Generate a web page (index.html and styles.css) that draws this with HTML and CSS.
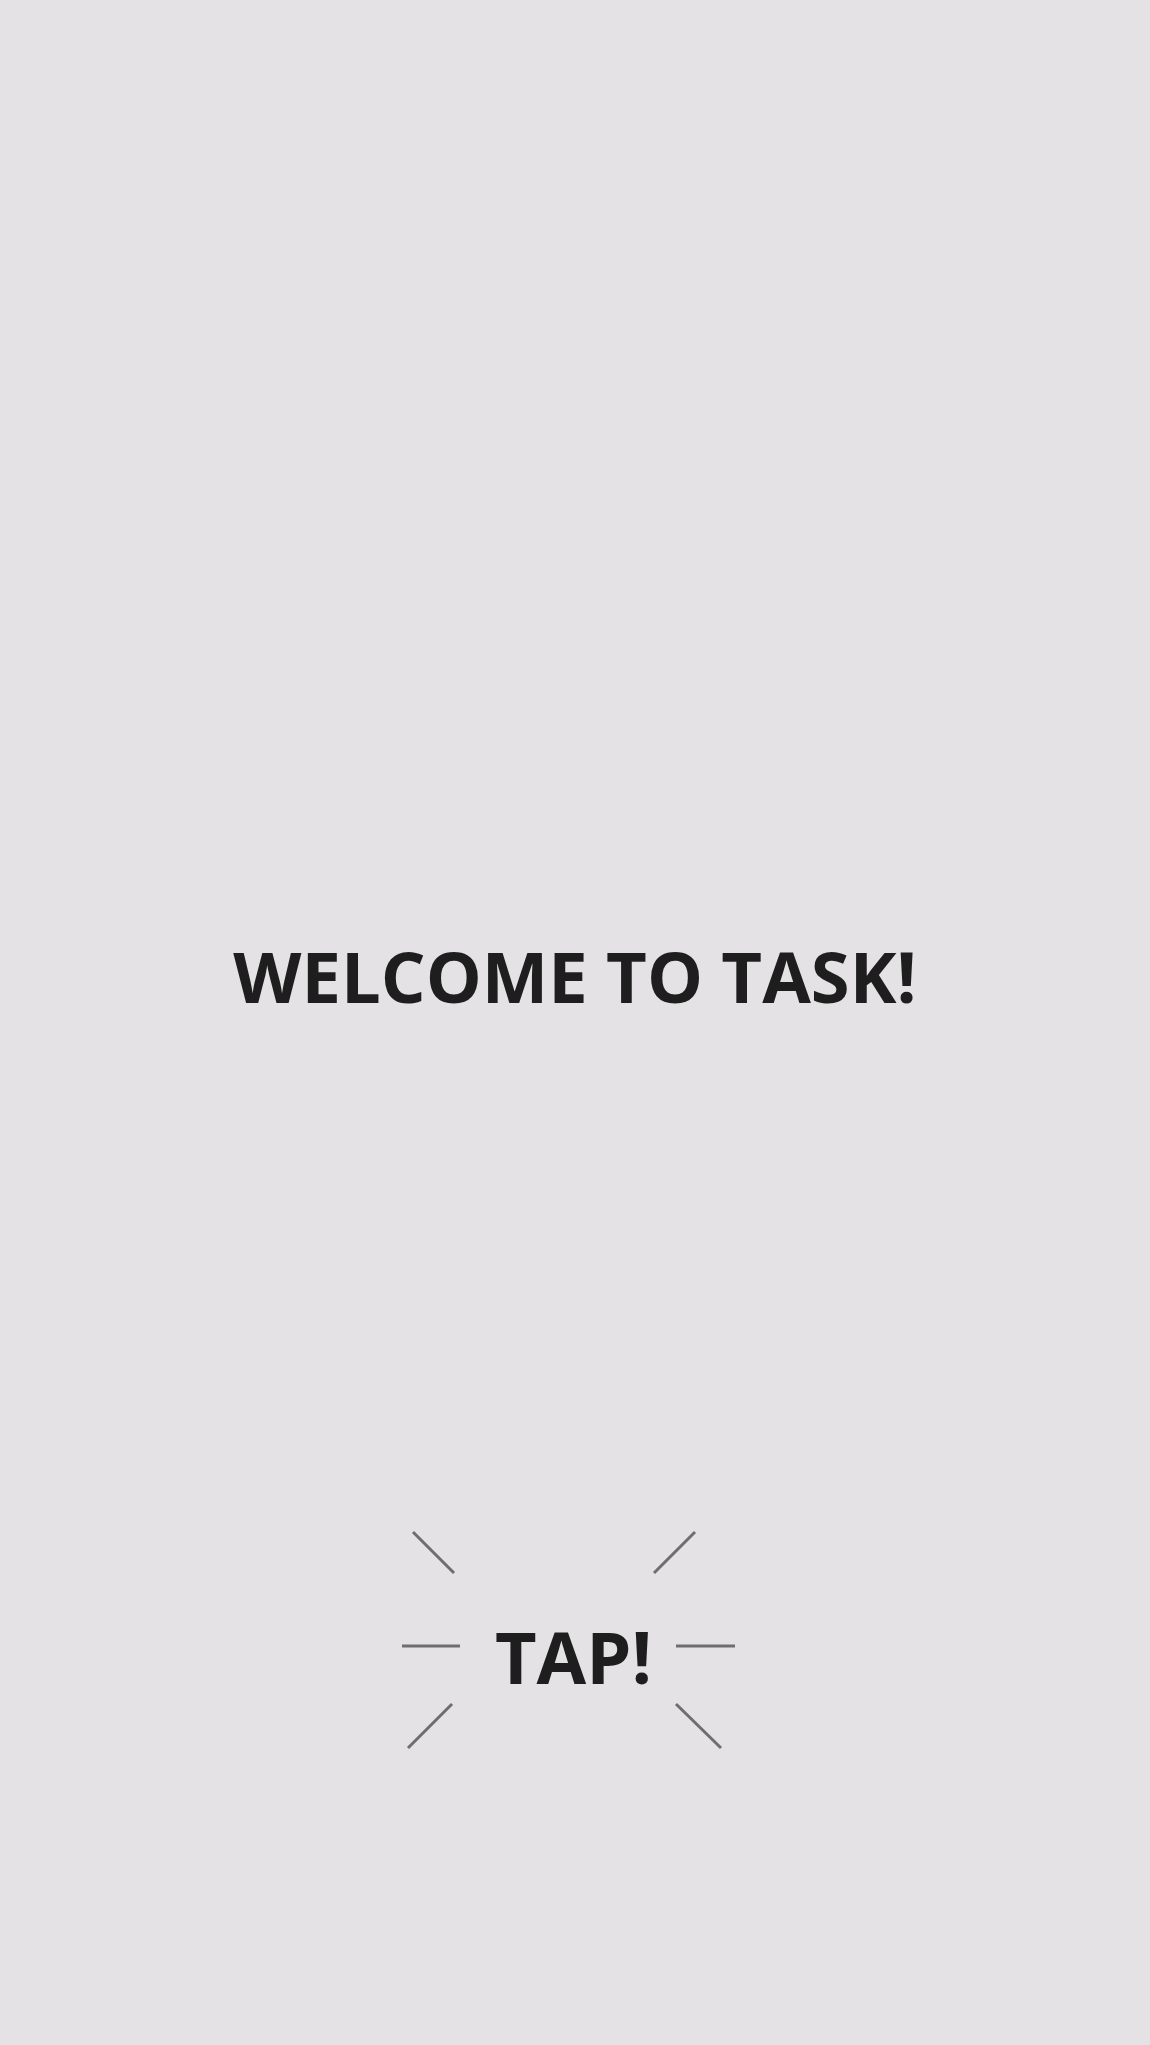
FILE: index.html
```html
<!DOCTYPE html>
<html lang="en">
<head>
<meta charset="utf-8">
<title>Welcome</title>
<link rel="stylesheet" href="styles.css">
</head>
<body>
<main class="screen">
  <h1 class="title">WELCOME TO TASK!</h1>
  <div class="burst">
    <svg class="rays" width="340" height="222" viewBox="0 0 340 222" aria-hidden="true">
      <g stroke="#6f6e6f" stroke-width="3" stroke-linecap="butt">
        <line x1="13" y1="3" x2="54" y2="44"/>
        <line x1="295" y1="3" x2="254" y2="44"/>
        <line x1="2" y1="117" x2="60" y2="117"/>
        <line x1="276" y1="117" x2="335" y2="117"/>
        <line x1="52" y1="175" x2="8" y2="219"/>
        <line x1="276" y1="175" x2="321" y2="219"/>
      </g>
    </svg>
    <div class="tap">TAP!</div>
  </div>
</main>
</body>
</html>
```
FILE: styles.css
```css
html, body {
  margin: 0;
  padding: 0;
  background: #e4e2e4;
}
.screen {
  min-height: 2045px;
  box-sizing: border-box;
  padding-top: 941px;
  display: flex;
  flex-direction: column;
  align-items: center;
  font-family: "Open Sans", "Liberation Sans", sans-serif;
  color: #1e1e1e;
}
.title {
  margin: 0;
  font-size: 70.5px;
  line-height: 70px;
  font-weight: 700;
  letter-spacing: 0;
  white-space: nowrap;
}
.burst {
  margin-top: 518px;
  width: 340px;
  height: 222px;
  position: relative;
  align-self: flex-start;
  margin-left: 400px;
  display: flex;
  justify-content: center;
}
.rays {
  position: absolute;
  left: 0;
  top: 0;
}
.tap {
  padding-top: 91px;
  padding-left: 7px;
  font-size: 72px;
  line-height: 72px;
  font-weight: 700;
}
```
